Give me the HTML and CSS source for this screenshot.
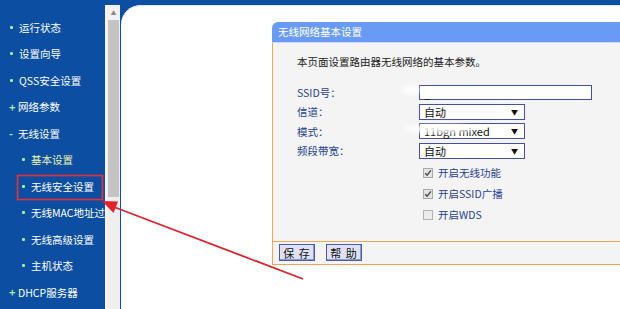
FILE: index.html
```html
<!DOCTYPE html>
<html lang="zh-CN">
<head>
    <meta charset="UTF-8">
    <title>无线网络基本设置</title>
    <link rel="stylesheet" href="styles.css">
</head>
<body>
    <div class="frame">
        <nav class="menu">
            <div class="item"><span class="dot"></span>运行状态</div>
            <div class="item"><span class="dot"></span>设置向导</div>
            <div class="item"><span class="dot"></span>QSS安全设置</div>
            <div class="item"><span class="sign">+</span>网络参数</div>
            <div class="item"><span class="sign">-</span>无线设置</div>
            <div class="item sub current"><span class="dot"></span>基本设置</div>
            <div class="item sub"><span class="dot"></span>无线安全设置</div>
            <div class="item sub"><span class="dot"></span>无线MAC地址过滤</div>
            <div class="item sub"><span class="dot"></span>无线高级设置</div>
            <div class="item sub"><span class="dot"></span>主机状态</div>
            <div class="item"><span class="sign">+</span>DHCP服务器</div>
        </nav>

        <div class="scrollbar">
            <div class="sb-up">▲</div>
            <div class="sb-thumb"></div>
        </div>

        <main class="content">
            <div class="panel">
                <div class="panel-title">无线网络基本设置</div>
                <div class="panel-body">
                    <p class="intro">本页面设置路由器无线网络的基本参数。</p>

                    <div class="row">
                        <span class="label">SSID号：</span>
                        <div class="input">_</div>
                    </div>
                    <div class="row">
                        <span class="label">信道：</span>
                        <div class="select">自动</div>
                    </div>
                    <div class="row">
                        <span class="label">模式：</span>
                        <div class="select">11bgn mixed</div>
                    </div>
                    <div class="row">
                        <span class="label">频段带宽：</span>
                        <div class="select">自动</div>
                    </div>

                    <div class="check-row">
                        <svg class="check" width="10" height="10" viewBox="0 0 10 10"><rect x="0.5" y="0.5" width="9" height="9" fill="#e4e4e4" stroke="#a9a9a9"/><path d="M2.2 5.2 L4.1 7.2 L7.9 2.4" fill="none" stroke="#4a4a4a" stroke-width="1.5"/></svg>
                        <span>开启无线功能</span>
                    </div>
                    <div class="check-row">
                        <svg class="check" width="10" height="10" viewBox="0 0 10 10"><rect x="0.5" y="0.5" width="9" height="9" fill="#e4e4e4" stroke="#a9a9a9"/><path d="M2.2 5.2 L4.1 7.2 L7.9 2.4" fill="none" stroke="#4a4a4a" stroke-width="1.5"/></svg>
                        <span>开启SSID广播</span>
                    </div>
                    <div class="check-row">
                        <svg class="check" width="10" height="10" viewBox="0 0 10 10"><rect x="0.5" y="0.5" width="9" height="9" fill="#ececec" stroke="#b3b3b3"/></svg>
                        <span>开启WDS</span>
                    </div>
                </div>
                <div class="panel-foot">
                    <button class="btn">保 存</button>
                    <button class="btn">帮 助</button>
                </div>
            </div>
        </main>

        <!-- annotation drawn over the screenshot -->
        <svg class="marks" width="620" height="309" viewBox="0 0 620 309">
            <defs>
                <filter id="smear" x="-50%" y="-50%" width="200%" height="200%">
                    <feGaussianBlur stdDeviation="2"/>
                </filter>
            </defs>
            <ellipse cx="411" cy="90" rx="9" ry="4" fill="#fff" filter="url(#smear)"/>
            <ellipse cx="440" cy="129" rx="36" ry="4" fill="#fff" opacity="0.9" filter="url(#smear)"/>
            <rect x="17.5" y="175.5" width="85" height="24" fill="none" stroke="#d23440" stroke-width="1.8"/>
            <line x1="303" y1="279" x2="114" y2="207" stroke="#e2232c" stroke-width="1.8"/>
            <polygon points="102,201 118,201.5 113.5,213" fill="#e2232c"/>
        </svg>
    </div>
</body>
</html>
```

FILE: styles.css
```css
body {
    margin: 0;
    font-family: "Noto Sans CJK SC", "Liberation Sans", sans-serif;
    font-size: 10.5px;
}

.frame {
    position: relative;
    display: flex;
    width: 620px;
    height: 309px;
    overflow: hidden;
    background-color: #0b4ea2;
}

/* left menu */
.menu {
    flex-shrink: 0;
    width: 105px;
    padding-top: 14px;
    overflow: hidden;
    white-space: nowrap;
    color: #fff;
}
.item {
    display: flex;
    align-items: center;
    height: 26.5px;
    padding-left: 9px;
}
.item.sub {
    padding-left: 21px;
}
.item.current {
    color: #eef3a6;
}
.dot {
    flex-shrink: 0;
    width: 3px;
    height: 3px;
    margin: 0 6px 0 1px;
    border-radius: 1px;
    background-color: #a8ec9c;
}
.sign {
    flex-shrink: 0;
    width: 9px;
    color: #a8ec9c;
    font-weight: bold;
    font-size: 11px;
}

/* fake scrollbar of the frame */
.scrollbar {
    flex-shrink: 0;
    width: 13px;
    margin-top: 5px;
    border-left: 2px solid #f4f6fa;
    background-color: #efefef;
}
.sb-up {
    height: 15px;
    font-size: 6px;
    line-height: 15px;
    text-align: center;
    color: #8a8a8a;
    background-color: #f2f2f2;
}
.sb-thumb {
    height: 177px;
    margin: 0 1px;
    background-color: #c4c4c4;
}

/* main frame */
.content {
    flex: 1;
    margin: 5px 0 0 1px;
    padding: 17px 0 0 151px;
    background-color: #fff;
    border-top-left-radius: 20px;
    box-shadow: inset 0 1px 0 #dbe6f7;
    overflow: hidden;
}

.panel {
    width: 420px;
}
.panel-title {
    height: 20px;
    padding-left: 6px;
    line-height: 20px;
    color: #fff;
    background-color: #699bf6;
    border-top-left-radius: 6px;
    border-bottom: 1px solid #c9dafc;
}
.panel-body {
    height: 187px;
    padding: 11px 0 0 24px;
    background-color: #f4f4f4;
    border-left: 1px solid #f2a654;
}
.intro {
    margin: 0 0 14px;
    line-height: 16px;
    color: #222;
}

.row {
    display: flex;
    align-items: center;
    height: 16px;
    margin-bottom: 3.5px;
}
.label {
    width: 122px;
    color: #1e3f8e;
}
.input,
.select {
    position: relative;
    box-sizing: border-box;
    height: 16px;
    padding-left: 4px;
    line-height: 15px;
    font-size: 11px;
    color: #111;
    background-color: #fff;
    border: 1px solid #4350a3;
}
.input {
    width: 173px;
    height: 15px;
}
.select {
    width: 106px;
}
.select::after {
    content: "▼";
    position: absolute;
    right: 6px;
    top: 0;
    font-size: 7px;
    color: #111;
}

.check-row {
    display: flex;
    align-items: center;
    height: 21px;
    padding-left: 126px;
    color: #1e3f8e;
}
.check {
    margin-right: 5px;
}
.row + .check-row {
    margin-top: 1.5px;
}

.panel-foot {
    display: flex;
    gap: 11px;
    height: 24px;
    padding: 2px 0 0 6px;
    box-sizing: border-box;
    background-color: #f4f4f4;
    border: 1px solid #f2a654;
    border-right: none;
}
.btn {
    width: 36px;
    height: 17px;
    padding: 0;
    font-family: "Noto Sans CJK SC", sans-serif;
    font-size: 11px;
    line-height: 14px;
    letter-spacing: 1px;
    color: #111;
    background-color: #dfe2f6;
    border: 1px solid #4a59a8;
    box-shadow: inset -1px -1px 0 #8f9acb;
}

.marks {
    position: absolute;
    top: 0;
    left: 0;
    pointer-events: none;
}
```
